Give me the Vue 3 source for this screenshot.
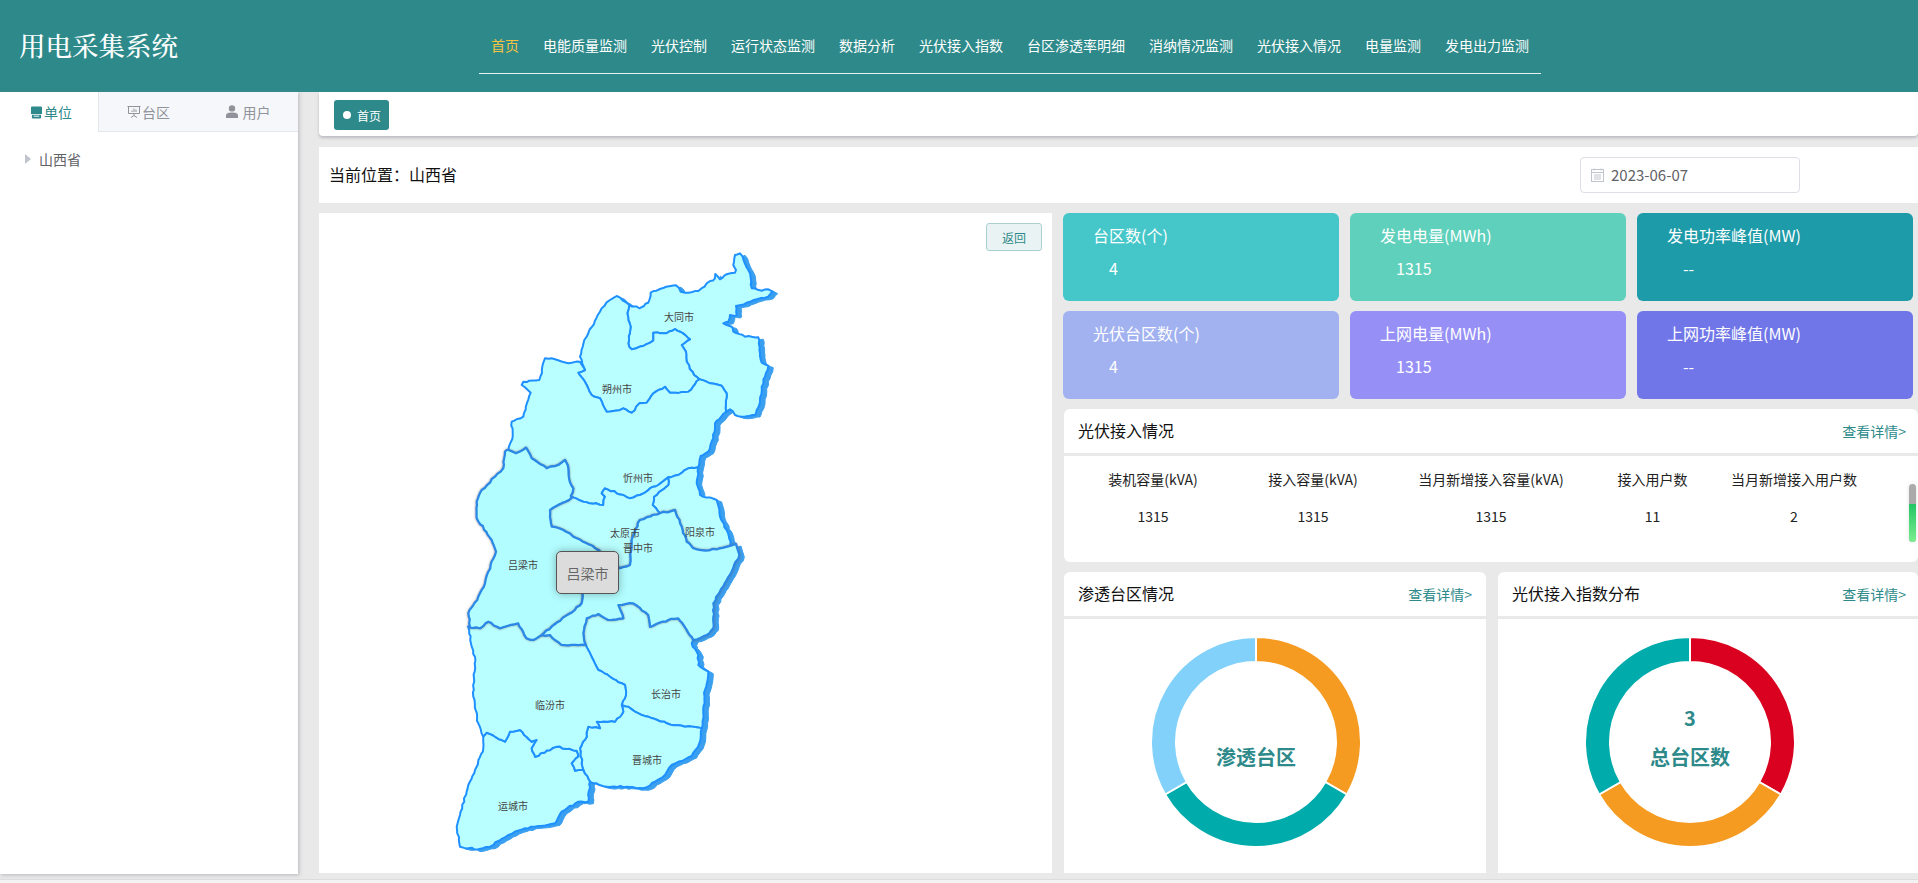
<script setup>
const menus = ['首页','电能质量监测','光伏控制','运行状态监测','数据分析','光伏接入指数','台区渗透率明细','消纳情况监测','光伏接入情况','电量监测','发电出力监测']
const cards = [
  { t:'台区数(个)', v:'4', c:'#45c7c9' },
  { t:'发电电量(MWh)', v:'1315', c:'#5ed0bb' },
  { t:'发电功率峰值(MW)', v:'--', c:'#1e9ba8' },
  { t:'光伏台区数(个)', v:'4', c:'#a2b2f0' },
  { t:'上网电量(MWh)', v:'1315', c:'#9690f6' },
  { t:'上网功率峰值(MW)', v:'--', c:'#7076e8' },
]
const cols = [
  { h:'装机容量(kVA)', v:'1315' },
  { h:'接入容量(kVA)', v:'1315' },
  { h:'当月新增接入容量(kVA)', v:'1315' },
  { h:'接入用户数', v:'11' },
  { h:'当月新增接入用户数', v:'2' },
]

// donut ---------------------------------------------------------
const CX = 192, CY = 123, RO = 105, RI = 80
function arc(a0, a1) {
  const p = (r, a) => {
    const t = a * Math.PI / 180
    return `${(CX + r * Math.sin(t)).toFixed(2)} ${(CY - r * Math.cos(t)).toFixed(2)}`
  }
  return `M${p(RO,a0)} A${RO} ${RO} 0 0 1 ${p(RO,a1)} L${p(RI,a1)} A${RI} ${RI} 0 0 0 ${p(RI,a0)} Z`
}
const donuts = [
  { title:'渗透台区情况', colors:['#f69b22','#00abab','#82d1fa'], num:'', label:'渗透台区' },
  { title:'光伏接入指数分布', colors:['#da0020','#f69b22','#00abab'], num:'3', label:'总台区数' },
].map(d => ({ ...d, segs: d.colors.map((c, i) => ({ c, d: arc(i * 120, (i + 1) * 120) })) }))

// map, traced from the three crops ------------------------------
const conv = (ox, oy) => s => s.trim().split(/\s+/).map(p => {
  const [x, y] = p.split(',').map(Number)
  return [ox + x / 3, oy + y / 3]
})
const A = conv(440, 220), B = conv(440, 540), C = conv(460, 440)

let seed = 12345
const rnd = () => { seed = (seed * 16807) % 2147483647; return seed / 2147483647 - 0.5 }
function rough(pts) {
  const out = [pts[0]]
  for (let i = 1; i < pts.length; i++) {
    const [x0, y0] = pts[i - 1], [x1, y1] = pts[i]
    const n = Math.max(1, Math.round(Math.hypot(x1 - x0, y1 - y0) / 3.5))
    for (let k = 1; k < n; k++) {
      out.push([x0 + (x1 - x0) * k / n + rnd() * 1.5, y0 + (y1 - y0) * k / n + rnd() * 1.5])
    }
    out.push(pts[i])
  }
  return out
}
const E = o => { const r = {}; for (const k in o) r[k] = rough(o[k]); return r }
const e = E({
  dtTop: A('568,255 598,265 612,258 625,248 632,218 660,207 708,196 722,215 745,218 775,213 800,190 825,175 826,162 840,178 862,162 885,158 888,150 880,135 885,105 900,100 908,110 925,150 932,175 935,205 965,212 985,208 998,215 985,230 950,238 920,248 888,258 890,285 885,288 870,285 865,305 850,310 875,320 880,335 915,350 935,350 955,352 960,400 965,428 985,437 975,470 965,500 960,545 950,570 945,585 905,590 885,585 870,568 858,575'),
  dtXz: A('858,575 860,520 845,497 810,490 778,478'),
  dtSz: A('778,478 762,465 740,425 738,395 725,375 750,358 720,335 705,327 680,340 640,338 640,362 610,378 575,388 565,370 572,320 562,280 568,255'),
  szOut: A('568,255 530,228 510,240 485,265 445,340 430,372 420,410 435,450 415,458'),
  szXz: A('415,458 440,495 455,525 480,535 500,575 525,572 550,565 575,578 598,550 620,548 640,520 675,500 690,518 705,518 745,515 778,478'),
  xzOut: A('415,458 435,450 420,425 385,430 345,418 315,415 298,480 250,485 245,495 272,518 250,590 215,605 218,650 205,690'),
  xzLl: A('205,690 228,700 258,683 275,715 320,745 355,735 375,720 385,745 388,780 400,805 392,828'),
  xzTy: A('392,828 430,845 490,855 495,830 485,820 495,805 550,825 570,835 600,825 640,800 655,795 685,772'),
  xzYq: A('685,772 715,765 745,745 775,742'),
  xzEast: A('775,742 782,708 805,695 820,655 825,610 858,575'),
  yqEast: A('775,742 770,790 780,825 830,840 840,890 860,930 872,965 870,978'),
  yqJz: C('810,318 780,325 735,332 700,325 680,305 665,260 645,210 600,220'),
  yqTy: C('600,220 578,195 582,170 625,135 625,115'),
  tyLl: C('335,173 270,210 275,260 310,270 350,295 415,330'),
  tyJz: C('415,330 480,385 510,375 515,300 540,240 600,220'),
  llWest: C('140,30 135,35 130,85 105,110 65,150 50,185 50,235 95,300 108,335 85,395 75,430 55,470 25,520 30,560'),
  llLf: B('85,260 120,265 145,245 180,265 235,250 260,295 280,300 305,285'),
  llJz: B('305,285 335,260 405,210 425,190 428,160 450,80 475,30'),
  jzLf: B('305,285 330,285 345,300 365,315 437,315'),
  jzCz: B('437,315 430,280 440,235 475,222 505,240 550,235 535,195 580,190 625,225 630,260 685,240 715,235 760,300'),
  jzEast: B('760,300 800,285 820,265 820,190 860,120 898,45 888,12'),
  czEast: B('760,300 755,310 775,345 775,375 805,395 795,450 790,520 785,565'),
  czJc: B('785,565 735,560 680,550 625,530 585,515 565,500 545,495'),
  czLf: B('545,495 558,465 555,435 510,410 475,390 460,360 437,315'),
  jcOut: B('785,565 778,610 755,648 695,675 675,705 645,725 610,745 590,745 560,740 500,740 450,725'),
  jcYc: B('450,725 430,690'),
  jcLf: B('430,690 420,625 440,590 445,560 480,565 470,545 525,545 550,515 545,495'),
  ycLf: B('130,590 140,578 195,605 210,575 240,570 275,605 290,600 275,625 285,650 350,620 410,632 415,650 395,670 405,692 430,690'),
  ycOut: B('450,725 445,785 415,785 365,815 345,850 255,865 205,885 150,920 115,928 60,920 50,860 60,825 85,735 105,690 130,625 130,590'),
  lfWest: B('130,590 115,550 100,470 105,350 95,320 85,260'),
})
const rev = a => [...a].reverse()
const join = (...parts) => parts.flat()
const toD = pts => 'M' + pts.map(p => `${p[0].toFixed(1)} ${p[1].toFixed(1)}`).join('L') + 'Z'

const regions = [
  join(e.dtTop, e.dtXz, e.dtSz),
  join(e.szOut, e.szXz, e.dtSz),
  join(e.xzOut, e.xzLl, e.xzTy, e.xzYq, e.xzEast, e.dtXz, rev(e.szXz)),
  join(e.xzYq, e.yqEast, e.yqJz, e.yqTy),
  join(e.xzTy, rev(e.yqTy), rev(e.tyJz), rev(e.tyLl)),
  join(e.czEast, e.czJc, e.czLf, e.jzCz),
  join(e.jcOut, e.jcYc, e.jcLf, rev(e.czJc)),
  join(e.ycLf, rev(e.jcYc), e.ycOut),
  join(e.lfWest, e.llLf, e.jzLf, rev(e.czLf), rev(e.jcLf), rev(e.ycLf)),
]
// the highlighted pair (吕梁, 晋中)
const lvliang = join(e.llWest, e.llLf, e.llJz, rev(e.tyLl), rev(e.xzLl))
const jinzhong = join(e.tyJz, rev(e.yqJz), rev(e.jzEast), rev(e.jzCz), rev(e.jzLf), e.llJz)

const plain = regions.map(toD)
const hot = [toD(lvliang), toD(jinzhong)]
const shadow = [...plain, ...hot]
const labels = [
  ['大同市',679,316],['朔州市',617,388],['忻州市',638,477],['太原市',625,532],['晋中市',638,547],
  ['阳泉市',700,531],['吕梁市',523,564],['长治市',666,693],['临汾市',550,704],['晋城市',647,759],['运城市',513,805],
]
</script>

<template>
  <div class="page">
    <header class="top">
      <div class="brand">用电采集系统</div>
      <nav class="menu">
        <a v-for="(m, i) in menus" :key="i" class="menu-item" :class="{ on: i === 0 }">{{ m }}</a>
      </nav>
    </header>

    <div class="below">
      <aside class="side">
        <div class="tabs">
          <div class="tab active">
            <svg width="11" height="13" viewBox="0 0 12 13"><path d="M1 0h10a1 1 0 0 1 1 1v7H0V1a1 1 0 0 1 1-1z" fill="#2e8a8a"/><path d="M1 9h10v3a1 1 0 0 1-1 1H2a1 1 0 0 1-1-1z" fill="#2e8a8a"/><rect x="3" y="10" width="6" height="1" fill="#fff"/></svg>
            <span>单位</span>
          </div>
          <div class="tab">
            <svg width="14" height="13" viewBox="0 0 14 13" fill="none" stroke="#909399"><path d="M.5 1.5h13M1.5 1.5v7h11v-7M7 8.5v2M4 12.5l3-2 3 2"/><path d="M5 7V5.5M7 7V3.500M9 7V4.500"/></svg>
            <span>台区</span>
          </div>
          <div class="tab">
            <svg width="12" height="13" viewBox="0 0 12 13" fill="#909399"><circle cx="6" cy="3.4" r="3.2"/><path d="M0 13v-2.5C0 8.300 2.500 7.500 6 7.500s6 .8 6 3V13z"/></svg>
            <span>用户</span>
          </div>
        </div>
        <div class="tree"><i class="caret"></i><span>山西省</span></div>
      </aside>

      <main class="content">
        <div class="tagbar">
          <div class="tag"><i class="dot"></i>首页</div>
        </div>
        <div class="where">
          <span class="where-text">当前位置：山西省</span>
          <div class="date">
            <svg width="13" height="14" viewBox="0 0 13 14" fill="none" stroke="#c0c4cc"><rect x=".5" y="1.500" width="12" height="12"/><path d="M.5 4.500h12M3 .5v2M10 .5v2M3 7h7M3 9h7M3 11h7"/></svg>
            <span>2023-06-07</span>
          </div>
        </div>

        <div class="grid">
          <section class="map">
            <button class="back">返回</button>
            <svg class="map-svg" viewBox="319 213 733 660" width="733" height="660">
              <defs>
                <filter id="glow" x="-10%" y="-10%" width="120%" height="120%">
                  <feDropShadow dx="0" dy="0" stdDeviation="1.200" flood-color="#666" flood-opacity=".75"/>
                </filter>
              </defs>
              <g transform="translate(5 2)">
                <path v-for="(d, i) in shadow" :key="'s' + i" :d="d" fill="#3a9fee" stroke="#3a9fee" stroke-width="1"/>
              </g>
              <path v-for="(d, i) in plain" :key="'r' + i" :d="d" fill="#baffff" stroke="#1e90ff" stroke-width="2" stroke-linejoin="round"/>
              <path v-for="(d, i) in hot" :key="'h' + i" :d="d" fill="#b2fdff" stroke="#2a88e6" stroke-width="2.200" stroke-linejoin="round" filter="url(#glow)"/>
              <text v-for="l in labels" :key="l[0]" :x="l[1]" :y="l[2]" class="city">{{ l[0] }}</text>
            </svg>
            <div class="tip">吕梁市</div>
          </section>

          <section class="right">
            <div class="cards">
              <div v-for="c in cards" :key="c.t" class="card" :style="{ background: c.c }">
                <div class="card-t">{{ c.t }}</div>
                <div class="card-v">{{ c.v }}</div>
              </div>
            </div>

            <div class="pv">
              <div class="head"><span>光伏接入情况</span><a>查看详情&gt;</a></div>
              <div class="pv-body">
                <div class="table">
                  <div v-for="c in cols" :key="c.h" class="col">
                    <div class="col-h">{{ c.h }}</div>
                    <div class="col-v">{{ c.v }}</div>
                  </div>
                </div>
                <div class="thumb"><i></i></div>
              </div>
            </div>

            <div class="donuts">
              <div v-for="d in donuts" :key="d.title" class="dpanel">
                <div class="head"><span>{{ d.title }}</span><a>查看详情&gt;</a></div>
                <div class="dbody">
                  <svg width="384" height="246" viewBox="0 0 384 246">
                    <path v-for="s in d.segs" :key="s.c" :d="s.d" :fill="s.c" stroke="#fff" stroke-width="2"/>
                    <text v-if="d.num" x="192" y="98" class="dnum">{{ d.num }}</text>
                    <text x="192" y="137" class="dlabel">{{ d.label }}</text>
                  </svg>
                </div>
              </div>
            </div>
          </section>
        </div>
      </main>
    </div>
  </div>
</template>

<style>
html, body { margin: 0; background: #e9e9e9; overflow: hidden; }
</style>

<style scoped>
.page {
  width: 1918px; height: 883px; overflow: hidden; background: #e9e9e9;
  font-family: "Noto Sans CJK SC", "Liberation Sans", sans-serif; font-size: 14px;
  position: relative; display: flex; flex-direction: column;
}
.page::after {
  content: ""; position: absolute; left: 0; right: 0; bottom: 0; height: 3px;
  background: #f3f3f3; border-top: 1px solid #dcdcdc;
}
.top { height: 92px; flex: none; background: #2e8a8a; display: flex; align-items: flex-start; }
.brand {
  width: 479px; padding-left: 19px; box-sizing: border-box; flex: none; margin-top: 27px;
  color: #fff; font-size: 26.500px; line-height: 36px; white-space: nowrap; font-weight: 500;
  font-family: "Noto Serif CJK SC", "Liberation Serif", serif;
}
.menu { margin-top: 19px; height: 54px; border-bottom: 1px solid #e6f1f1; display: flex; }
.menu-item { padding: 0 12px; line-height: 52px; color: #fff; font-size: 14px; white-space: nowrap; }
.menu-item.on { color: #f5c242; }

.below { flex: 1; display: flex; min-height: 0; }
.side {
  width: 298px; height: 782px; flex: none; background: #fff;
  box-shadow: 1px 1px 4px rgba(120,120,140,.45);
}
.tabs { display: flex; height: 40px; background: #f5f7fa; box-sizing: border-box; }
.tab {
  width: 99px; height: 40px; box-sizing: border-box; display: flex; align-items: center; justify-content: center; gap: 1px;
  color: #909399; border-bottom: 1px solid #e4e7ed;
}
.tab.active { color: #2e8a8a; background: #fff; border-bottom: 0; border-right: 1px solid #e4e7ed; padding-left: 5px; gap: 2px; }
.tab:nth-child(3) { gap: 5px; width: 100px; }
.tree { display: flex; align-items: center; height: 26px; margin-top: 14px; padding-left: 25px; color: #606266; }
.caret { width: 0; height: 0; border-style: solid; border-width: 5px 0 5px 6px; border-color: transparent transparent transparent #c0c4cc; margin-right: 8px; }

.content { width: 1599px; margin-left: 21px; display: flex; flex-direction: column; min-width: 0; }
.tagbar {
  height: 44px; flex: none; background: #fff; border-radius: 0 0 4px 4px; box-sizing: border-box;
  padding: 8px 15px; box-shadow: 0 2px 3px rgba(120,120,140,.4);
}
.tag {
  width: 55px; height: 30px; background: #2e8a8a; border-radius: 3px; color: #fff; font-size: 12px;
  display: flex; align-items: center; padding-left: 9px; box-sizing: border-box; gap: 6px;
}
.dot { width: 8px; height: 8px; border-radius: 50%; background: #fff; }
.where {
  margin-top: 11px; height: 56px; flex: none; background: #fff; display: flex; align-items: center;
  padding-left: 10px;
}
.where-text { color: #111; font-size: 16px; margin-bottom: 2px; }
.date {
  margin-left: 1123px; width: 220px; height: 36px; box-sizing: border-box; border: 1px solid #dcdfe6; border-radius: 4px;
  display: flex; align-items: center; padding-left: 10px; gap: 7px; color: #606266; font-size: 15px;
}
.date span { margin-bottom: 1px; }
.grid { margin-top: 10px; display: flex; gap: 11px; height: 660px; }
.map { width: 733px; height: 660px; flex: none; background: #fff; position: relative; }
.map-svg { display: block; }
.back {
  position: absolute; left: 667px; top: 10px; width: 56px; height: 28px; border: 1px solid #abd0d0; border-radius: 3px;
  background: #eaf3f3; color: #2e8a8a; font-size: 12px; font-family: inherit; padding: 0; z-index: 2;
}
.city { font-size: 10px; fill: #444; text-anchor: middle; dominant-baseline: central; }
.tip {
  position: absolute; left: 237px; top: 338px; width: 63px; height: 43px; box-sizing: border-box;
  background: #dcdcdc; border: 1.500px solid #555; border-radius: 5px; color: #666; font-size: 14px;
  display: flex; align-items: center; justify-content: center; box-shadow: 0 0 8px rgba(0,0,0,.3);
}
.right { flex: 1; min-width: 0; display: flex; flex-direction: column; }
.cards { display: grid; grid-template-columns: repeat(3, 276px); grid-auto-rows: 88px; column-gap: 11px; row-gap: 10px; }
.card { border-radius: 6px; color: #fff; padding: 10px 0 0 30px; box-sizing: border-box; font-size: 16px; }
.card-t { line-height: 24px; }
.card-v { line-height: 24px; margin-top: 9px; padding-left: 16px; }

.head {
  height: 44px; box-sizing: border-box; background: #fff; display: flex; align-items: center; justify-content: space-between;
  padding: 0 12px 2px 14px; border-radius: 6px 6px 0 0; font-size: 16px; color: #111;
}
.head a { color: #2e8a8a; font-size: 14px; margin-top: 2px; }
.dpanel:first-child .head { padding-right: 14px; }
.pv { margin: 10px 0 0 1px; }
.pv-body { margin-top: 3px; height: 106px; background: #fff; border-radius: 0 0 6px 6px; position: relative; box-sizing: border-box; padding-left: 9px; }
.table { display: grid; grid-template-columns: 160px 160px 196px 127px 156px; text-align: center; color: #222; padding-top: 11px; }
.col-h { line-height: 24px; white-space: nowrap; font-size: 14px; }
.col-v { line-height: 24px; margin-top: 13px; }
.thumb {
  position: absolute; right: 2px; top: 28px; width: 7px; height: 58px; border-radius: 4px; overflow: hidden;
  background: #aaa; box-shadow: 0 0 4px rgba(0,0,0,.12);
}
.thumb i { position: absolute; left: 0; right: 0; bottom: 0; height: 38px; background: linear-gradient(#22c565, #7aee8f); }
.donuts { margin: 10px 0 0 1px; display: flex; gap: 12px; }
.dpanel:first-child { width: 422px; }
.dpanel:last-child { width: 420px; }
.dbody { margin-top: 3px; height: 254px; background: #fff; }
.dbody svg { display: block; }
.dlabel, .dnum { fill: #2e8a8a; font-size: 20px; font-weight: 700; text-anchor: middle; dominant-baseline: central; }
</style>
